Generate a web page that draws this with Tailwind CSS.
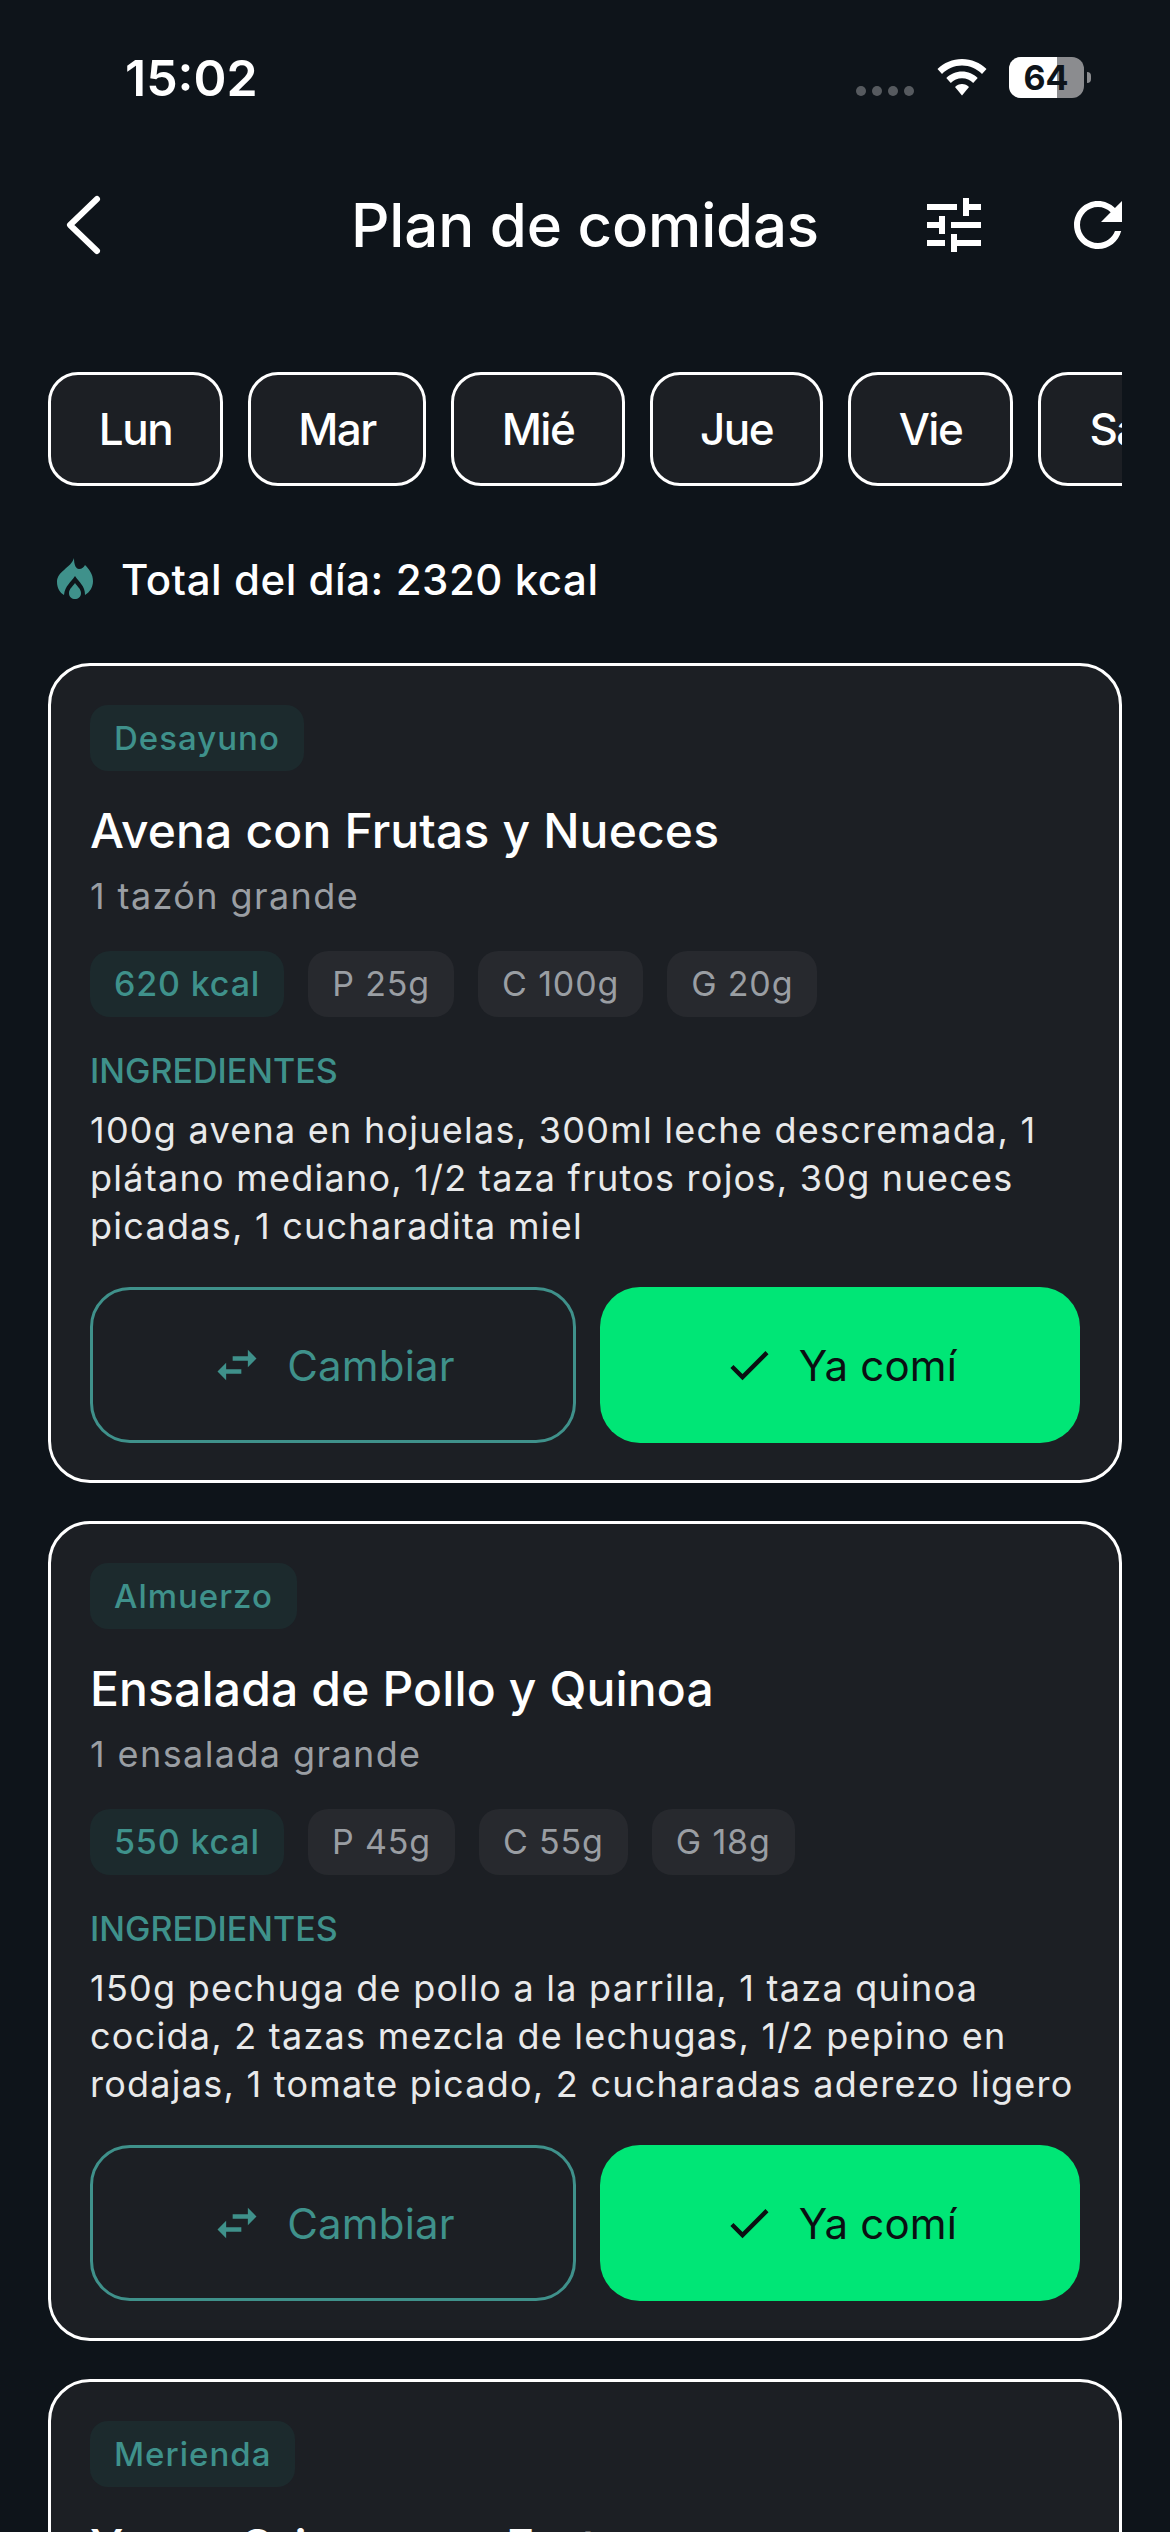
<!DOCTYPE html>
<html lang="es">
<head>
<meta charset="utf-8">
<script src="https://cdn.jsdelivr.net/npm/@tailwindcss/browser@4"></script>
</head>
<body class="bg-[#0e141a]">
<div class="w-[1170px] h-[2532px] overflow-hidden bg-[#0e141a] text-white font-['Inter',sans-serif]">
  <!-- status bar -->
  <div class="h-[156px] relative">
    <div class="absolute left-[125px] top-[48px] text-[50px] leading-[60px] font-semibold">15:02</div>
    <div class="absolute left-[856px] top-[86px] flex gap-[6px]">
      <span class="w-[10px] h-[10px] rounded-full bg-white/30"></span><span class="w-[10px] h-[10px] rounded-full bg-white/30"></span><span class="w-[10px] h-[10px] rounded-full bg-white/30"></span><span class="w-[10px] h-[10px] rounded-full bg-white/30"></span>
    </div>
    <svg class="absolute left-[937px] top-[59px]" width="50" height="37" viewBox="0 0 50 37" fill="white">
      <path d="M25 0C15.500 0 7 3.800 0.500 10L5 15C10.200 9.800 17.300 6.600 25 6.600S39.800 9.800 45 15L49.500 10C43 3.800 34.500 0 25 0Z"/>
      <path d="M25 12.500C19 12.500 13.400 15 9.300 19L13.800 24C16.700 21 20.600 19.200 25 19.200S33.300 21 36.200 24L40.700 19C36.600 15 31 12.500 25 12.500Z"/>
      <path d="M25 25C22.200 25 19.800 26.100 18 27.900L25 36.500L32 27.900C30.200 26.100 27.800 25 25 25Z"/>
    </svg>
    <div class="absolute left-[1009px] top-[57px] w-[75px] h-[41px] rounded-[12px] overflow-hidden bg-[#8b8c8f] flex">
      <div class="w-[48px] h-full bg-white"></div>
    </div>
    <div class="absolute left-[1087px] top-[72px] w-[4px] h-[11px] rounded-r-full bg-[#8b8c8f]"></div>
    <div class="absolute left-[1009px] top-[57px] w-[75px] h-[41px] flex items-center justify-center pr-[1px] text-[#0e141a] text-[34px] font-bold">64</div>
  </div>
  <!-- header -->
  <div class="h-[72px] mt-[33px] pl-[48px] pr-[36px] flex items-center relative">
    <svg class="absolute left-[60px] top-0" width="48" height="72" viewBox="0 0 48 72" fill="none" stroke="white" stroke-width="6" stroke-linecap="round" stroke-linejoin="round"><path d="M37 10L10 36L37 62"/></svg>
    <div class="absolute left-0 right-0 top-0 h-[72px] flex items-center justify-center text-[60px] font-medium leading-[72px] tracking-[-0.2px]">Plan de comidas</div>
    <div class="ml-auto flex gap-[72px] relative">
      <svg width="72" height="72" viewBox="0 0 24 24" fill="white"><path d="M3 17v2h6v-2H3zM3 5v2h10V5H3zm10 16v-2h8v-2h-8v-2h-2v6h2zM7 9v2H3v2h4v2h2V9H7zm14 4v-2H11v2h10zm-6-4h2V7h4V5h-4V3h-2v6z"/></svg>
      <svg width="72" height="72" viewBox="0 0 24 24" fill="white"><path d="M17.65 6.350C16.200 4.900 14.210 4 12 4c-4.420 0-7.990 3.580-7.990 8s3.570 8 7.990 8c3.730 0 6.840-2.550 7.730-6h-2.080c-.82 2.330-3.040 4-5.650 4-3.310 0-6-2.690-6-6s2.690-6 6-6c1.660 0 3.140.69 4.220 1.780L13 11h7V4l-2.350 2.350z"/></svg>
    </div>
  </div>
  <!-- days -->
  <div class="mt-[111px] mx-[48px] flex gap-[25px] overflow-hidden text-[44px] font-medium tracking-[-1.5px]">
    <div class="shrink-0 h-[114px] w-[175px] flex items-center justify-center rounded-[30px] border-[3px] border-white bg-[#1c1f24]">Lun</div>
    <div class="shrink-0 h-[114px] w-[178px] flex items-center justify-center rounded-[30px] border-[3px] border-white bg-[#1c1f24]">Mar</div>
    <div class="shrink-0 h-[114px] w-[174px] flex items-center justify-center rounded-[30px] border-[3px] border-white bg-[#1c1f24]">Mié</div>
    <div class="shrink-0 h-[114px] w-[173px] flex items-center justify-center rounded-[30px] border-[3px] border-white bg-[#1c1f24]">Jue</div>
    <div class="shrink-0 h-[114px] w-[165px] flex items-center justify-center rounded-[30px] border-[3px] border-white bg-[#1c1f24]">Vie</div>
    <div class="shrink-0 h-[114px] w-[179px] flex items-center justify-center rounded-[30px] border-[3px] border-white bg-[#1c1f24]">Sáb</div>
  </div>
  <!-- total -->
  <div class="mt-[65px] ml-[57px] flex items-center gap-[28px] h-[56px]">
    <svg width="36" height="42" viewBox="0 0 36 42" fill="#3f918b"><path d="M17 0C14 10 0 13 0 24C0 30 3 35 7 37C8 28 14 24 18 18C22 24 28 28 28 37C33 34 36 29 36 23C36 16 32 11 28 7C27 9 25 11 22 11C19 11 17 7 17 0Z"/><path d="M18 25C20 28 24 31 24 35C24 39 21 41 18 41C15 41 12 39 12 35C12 31 16 28 18 25Z"/></svg>
    <div class="text-[42px] font-medium tracking-[0.55px]">Total del día: 2320 kcal</div>
  </div>
  <!-- cards -->
  <div class="mt-[56px] mx-[48px] flex flex-col gap-[38px]">
    <!-- card 1 -->
    <div class="rounded-[42px] border-[3px] border-white bg-[#1c1f24] px-[39px] pt-[39px] pb-[37px] shrink-0">
      <div class="inline-block align-top h-[66px] px-[24px] rounded-[18px] bg-[#1c2a2d] text-[#3f918b] text-[33px] font-medium leading-[66px] tracking-[1px]">Desayuno</div>
      <div class="mt-[30px] text-[48px] leading-[60px] font-medium tracking-[0.15px]">Avena con Frutas y Nueces</div>
      <div class="mt-[11px] text-[36px] leading-[48px] text-[#9a9ea3] tracking-[1.4px]">1 tazón grande</div>
      <div class="mt-[31px] flex gap-[24px] text-[34px] leading-[66px] tracking-[0.85px]">
        <div class="h-[66px] px-[24px] rounded-[20px] bg-[#1c2a2d] text-[#3f918b] font-medium">620 kcal</div>
        <div class="h-[66px] px-[24px] rounded-[20px] bg-[#27292e] text-[#9a9ea3]">P 25g</div>
        <div class="h-[66px] px-[24px] rounded-[20px] bg-[#27292e] text-[#9a9ea3]">C 100g</div>
        <div class="h-[66px] px-[24px] rounded-[20px] bg-[#27292e] text-[#9a9ea3]">G 20g</div>
      </div>
      <div class="mt-[32px] text-[34px] leading-[44px] text-[#3f918b] font-medium">INGREDIENTES</div>
      <div class="mt-[13px] text-[36px] leading-[48px] text-[#e8e9ea] tracking-[1.25px]">100g avena en hojuelas, 300ml leche descremada, 1 plátano mediano, 1/2 taza frutos rojos, 30g nueces picadas, 1 cucharadita miel</div>
      <div class="mt-[37px] flex gap-[24px]">
        <div class="flex-1 h-[156px] rounded-[40px] border-[3px] border-[#3f918b] flex items-center justify-center gap-[24px] text-[#3f918b] text-[42px] tracking-[0.2px]">
          <svg width="52" height="52" viewBox="0 0 24 24" fill="#3f918b"><path d="M6.990 11L3 15l3.990 4v-3H14v-2H6.990v-3zM21 9l-3.990-4v3H10v2h7.010v3L21 9z"/></svg>
          <span>Cambiar</span>
        </div>
        <div class="flex-1 h-[156px] rounded-[40px] bg-[#00e676] flex items-center justify-center gap-[24px] text-[#0b0f12] text-[42px] tracking-[0.2px]">
          <svg width="52" height="52" viewBox="0 0 24 24" fill="#0b0f12"><path d="M9 16.170L4.830 12l-1.420 1.410L9 19 21 7l-1.410-1.410z"/></svg>
          <span>Ya comí</span>
        </div>
      </div>
    </div>
    <!-- card 2 -->
    <div class="rounded-[42px] border-[3px] border-white bg-[#1c1f24] px-[39px] pt-[39px] pb-[37px] shrink-0">
      <div class="inline-block align-top h-[66px] px-[24px] rounded-[18px] bg-[#1c2a2d] text-[#3f918b] text-[33px] font-medium leading-[66px] tracking-[1px]">Almuerzo</div>
      <div class="mt-[30px] text-[48px] leading-[60px] font-medium tracking-[0.15px]">Ensalada de Pollo y Quinoa</div>
      <div class="mt-[11px] text-[36px] leading-[48px] text-[#9a9ea3] tracking-[1.4px]">1 ensalada grande</div>
      <div class="mt-[31px] flex gap-[24px] text-[34px] leading-[66px] tracking-[0.85px]">
        <div class="h-[66px] px-[24px] rounded-[20px] bg-[#1c2a2d] text-[#3f918b] font-medium">550 kcal</div>
        <div class="h-[66px] px-[24px] rounded-[20px] bg-[#27292e] text-[#9a9ea3]">P 45g</div>
        <div class="h-[66px] px-[24px] rounded-[20px] bg-[#27292e] text-[#9a9ea3]">C 55g</div>
        <div class="h-[66px] px-[24px] rounded-[20px] bg-[#27292e] text-[#9a9ea3]">G 18g</div>
      </div>
      <div class="mt-[32px] text-[34px] leading-[44px] text-[#3f918b] font-medium">INGREDIENTES</div>
      <div class="mt-[13px] text-[36px] leading-[48px] text-[#e8e9ea] tracking-[1.25px]">150g pechuga de pollo a la parrilla, 1 taza quinoa cocida, 2 tazas mezcla de lechugas, 1/2 pepino en rodajas, 1 tomate picado, 2 cucharadas aderezo ligero</div>
      <div class="mt-[37px] flex gap-[24px]">
        <div class="flex-1 h-[156px] rounded-[40px] border-[3px] border-[#3f918b] flex items-center justify-center gap-[24px] text-[#3f918b] text-[42px] tracking-[0.2px]">
          <svg width="52" height="52" viewBox="0 0 24 24" fill="#3f918b"><path d="M6.990 11L3 15l3.990 4v-3H14v-2H6.990v-3zM21 9l-3.990-4v3H10v2h7.010v3L21 9z"/></svg>
          <span>Cambiar</span>
        </div>
        <div class="flex-1 h-[156px] rounded-[40px] bg-[#00e676] flex items-center justify-center gap-[24px] text-[#0b0f12] text-[42px] tracking-[0.2px]">
          <svg width="52" height="52" viewBox="0 0 24 24" fill="#0b0f12"><path d="M9 16.170L4.830 12l-1.420 1.410L9 19 21 7l-1.410-1.410z"/></svg>
          <span>Ya comí</span>
        </div>
      </div>
    </div>
    <!-- card 3 -->
    <div class="h-[820px] rounded-[42px] border-[3px] border-white bg-[#1c1f24] px-[39px] pt-[39px] shrink-0">
      <div class="inline-block align-top h-[66px] px-[24px] rounded-[18px] bg-[#1c2a2d] text-[#3f918b] text-[33px] font-medium leading-[66px] tracking-[1px]">Merienda</div>
      <div class="mt-[30px] text-[48px] leading-[60px] font-medium tracking-[0.15px]">Yogur Griego con Frutas</div>
    </div>
  </div>
</div>
</body>
</html>
